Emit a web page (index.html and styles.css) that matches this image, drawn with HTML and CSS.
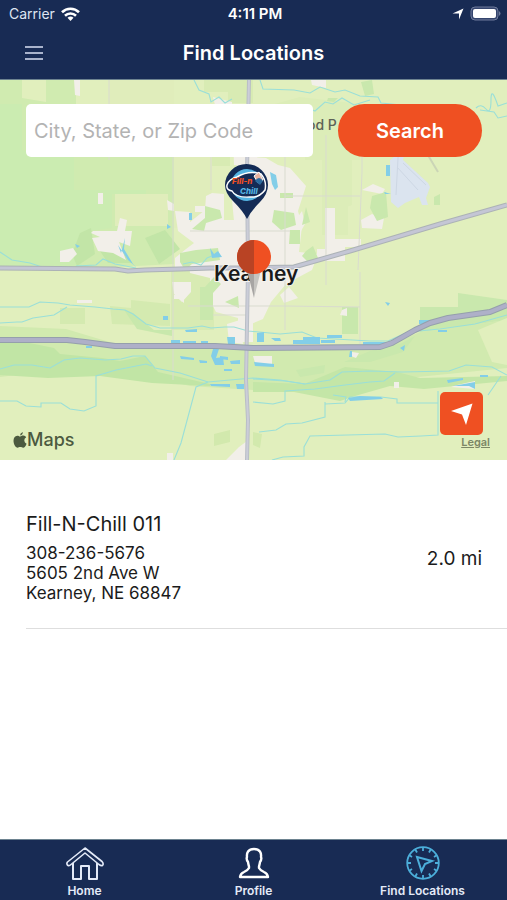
FILE: index.html
```html
<!DOCTYPE html>
<html lang="en">
<head>
  <meta charset="UTF-8" />
  <meta name="viewport" content="width=device-width, initial-scale=1.0" />
  <title>Find Locations</title>
  <link rel="stylesheet" href="styles.css">
</head>
<body>
  <header class="header">
    <div class="status-bar">
      <div class="carrier">
        <span>Carrier</span>
        <svg width="19" height="14" viewBox="0 0 19 14" fill="none" stroke="#fff" stroke-width="2.6">
          <path d="M1 5.2C5.700.6 13.300.6 18 5.2" />
          <path d="M4 8.700C7 5.800 12 5.800 15 8.700" />
          <path d="M6.500 10.800Q9.500 8.300 12.500 10.800L9.500 14Z" fill="#fff" stroke="none" />
        </svg>
      </div>
      <span class="time">4:11 PM</span>
      <div class="indicators">
        <svg width="12" height="12" viewBox="0 0 12 12"><path d="M11.500.5L7 11.500V5.500L.5 5.500Z" fill="#fff" /></svg>
        <svg width="31" height="15" viewBox="0 0 31 15">
          <rect x="1" y="1" width="27" height="13" rx="4" fill="#35456e" stroke="#6f7b9b" />
          <rect x="3" y="3" width="23" height="9" rx="2" fill="#fff" />
          <path d="M29 5Q32 7.500 29 10Z" fill="#6f7b9b" />
        </svg>
      </div>
    </div>
    <div class="nav-bar">
      <button class="menu-button" type="button" aria-label="Menu">
        <svg width="18" height="16" viewBox="0 0 18 16" stroke="#a9b3cc" stroke-width="2"><path d="M0 2H18M0 8H18M0 14H18" /></svg>
      </button>
      <h1>Find Locations</h1>
    </div>
  </header>

  <main>
    <section class="map" aria-label="Map">
      <svg class="map-canvas" viewBox="0 0 507 380" preserveAspectRatio="xMidYMid slice">
        <rect width="507" height="380" fill="#e1efbd" />

        <!-- fields and parkland -->
        <path d="M0 0H22V18L46 22V0H76V24H174V184L62 190H0Z" fill="#d0ebb0" />
        <path d="M0 24H22V70L74 76V110H146V114H112V148L82 152V188H0Z" fill="#cbecb1" />
        <path d="M109 0H174V24H109ZM174 50H212V148H174ZM115 114H168V146H115Z" fill="#e0edbb" />
        <path d="M204 0H253V23H228V12H204ZM212 56H230V86H212ZM171 190H214V250H171Z" fill="#d8ebb3" />
        <path d="M253 30L300 17L360 24V80H305V56H253ZM330 80H352V125L334 132ZM322 58H348V155H322Z" fill="#dcedb8" />
        <path d="M0 246L66 249L116 264L248 267L395 263L420 252L507 240V288L408 298L253 310L190 306L100 285L0 297Z" fill="#d1eaaf" />
        <path d="M60 228H85V244H60ZM110 226L131 228V220L170 224V246L112 244Z" fill="#d4eab0" />
        <path d="M0 257L54 268L60 274L102 278L120 281L145 276L158 292L210 304V306L152 303L100 296L48 298L0 295Z" fill="#c1e5a5" />
        <path d="M253 302L304 304L345 287L397 292L420 298L507 296V301L424 309L390 306L355 316L340 321L294 312H253Z" fill="#c4e6a7" />
        <path d="M296 290L325 285L324 293L300 297ZM344 282L370 271L402 263L415 256L403 272L370 282ZM420 227H458V213L507 220V240L420 252Z" fill="#c9e8ad" />
        <path d="M342 227H358V254H342ZM124 230L133 233L154 250L172 250V256L137 249Z" fill="#c8e8ac" />
        <path d="M478 250L507 238V285L492 282Z" fill="#e1efbd" />
        <path d="M214 354L230 350V362L214 366ZM253 352L262 354L260 368L253 365Z" fill="#d2e9ad" />
        <path d="M80 153L91 148L95 174L77 186L72 174ZM98 168L112 165L124 174L132 183H108ZM145 158L165 150L180 169L159 184Z" fill="#c2e5a7" />

        <!-- town blocks -->
        <g fill="#f2efe9">
          <path d="M74 0H80V16L75 15ZM98 113H103V124H98ZM100 157L91 153L93 151H117L120 138L127 140L125 151H132L130 166L119 162L126 180L113 173L98 171L92 158ZM60 171L73 168L77 174L69 182H60Z" />
          <path d="M167 120L174 124V131L168 130ZM175 131L190 132V142L205 130L206 116L212 113L224 114V140H238V118H253V262H238V238L216 232L210 220V198L190 193L189 184L175 190V178L186 169L194 163L178 151Z" />
          <path d="M238 76L266 78L278 85L290 88L306 106L298 131L302 146L299 172L318 174L312 190L286 204L271 222L263 239L244 247L232 120Z" />
          <path d="M198 47H225L224 52L252 63L260 85H234L233 55ZM317 169H325V159H361V167H345V181H317ZM361 140L372 134L384 138L382 149L362 148ZM325 128H335V168H325Z" />
          <path d="M362 110L373 104L385 109L382 114ZM302 131L305 144L297 158L286 154ZM172 202H191V212L182 222L174 214ZM77 220H92V223H77ZM227 244L240 240L243 264L229 262Z" />
          <path d="M342 230L347 228V236L340 235ZM352 272L359 273L356 278L351 276ZM394 302H399V308H394ZM311 0H326V8L312 5ZM457 305L475 301V309L451 307ZM239 367L247 361V380H226ZM167 373H173V380H167ZM178 218L184 214V223ZM174 215H180V219H174Z" />
          <path d="M253 276H272V284L256 286ZM195 126H209V132H195ZM213 17L232 22V25H215ZM280 215L289 207L298 218L284 223ZM279 49H307V55H286Z" />
        </g>
        <g fill="#c9e8ad">
          <path d="M192 149L205 138V126L220 130L222 138L206 143L204 151ZM180 173L196 170L218 168L220 180L192 184L185 190L180 182Z" />
          <path d="M274 130L294 133L296 145L281 150L272 142ZM280 113H293V118H280ZM290 150H300V164H289ZM225 222L238 216L239 228ZM205 207L214 197L221 204L213 213V240H200V207ZM306 127L310 142L302 145ZM306 171L313 166L318 178L309 183L302 176Z" />
          <path d="M372 116L386 112L388 137L377 141L370 128ZM328 18L338 18L334 22L327 21ZM361 2L372 0L374 14L365 16ZM434 117L440 114V125H434Z" />
        </g>
        <path d="M399 58H408L403 80L428 103L430 107L426 118L428 125H422L419 117L405 123L398 128L391 122L390 80L394 77Z" fill="#dbe4ef" />
        <path d="M399 60L396 115M403 83L426 105M397 87L418 110" stroke="#cdd7e4" fill="none" />

        <!-- streets -->
        <path d="M109 0V80M173 50V300M211 50V110M285 55V250M326 55V205M362 52V92L358 190M190 151H290M285 116H360M188 226H285L360 227M360 192V270M213 235H248" stroke="#d9dbcf" fill="none" />
        <path d="M413 50L438 92" stroke="#cbd5b6" stroke-width="2" fill="none" />

        <!-- rivers and creeks -->
        <g fill="none" stroke="#9adfd8" stroke-width="1.100">
          <path d="M194 0L199 10L209 14L211 22L219 17L225 23L232 19M260 0L263 9L294 10L310 13L320 7L335 12L345 10L360 16L378 17L381 23L401 25M300 25L315 31L325 22L333 24L342 18L354 25L370 20" />
          <path d="M476 28Q481 23 486 29T491 20T498 26L507 23M480 30L494 32L498 38L507 36" />
          <path d="M0 172L12 180L30 183L42 187M76 186L96 185L103 179L115 184L136 188M183 184L192 182L201 185L207 178L219 173" />
          <path d="M0 227H29L40 222L58 223L70 225L95 227L113 229L125 230L133 234L146 244L160 248L178 248L188 248L202 246L211 248L225 247L234 247L248 251L280 254L302 252L317 258L370 261L388 261L408 252L440 249L475 244L507 235" />
          <path d="M0 243L17 242L22 242L33 238L54 235L67 227" />
          <path d="M0 289L14 285L32 285L50 288L64 280L80 278L105 280L121 279L133 276H145L155 288L180 293L208 302L230 300L253 298L280 300L305 304L330 300L342 292L370 291L402 292L449 291L466 285L492 287L507 295" />
          <path d="M0 321H17L26 326L41 327V323H61L70 329L84 331L96 326V296L116 290L146 284L152 286M208 302L196 307L181 363L174 380M253 322L273 324L285 321V311L315 309L345 305L370 302L384 301L395 293M333 315L346 317L345 322M253 322L273 324M325 322V337L302 343L286 344L276 350L259 352" />
          <path d="M325 324L345 323L350 317L381 317L397 319V323H438M438 311V355L421 356L398 357L385 354L310 356L304 367V376L283 377L272 380M501 296L488 315M253 299L285 301L305 304" />
        </g>
        <g fill="#83cee8">
          <path d="M112 156L118 165L121 173L125 158L124 169L133 184L137 188L128 180L120 168ZM167 144L171 147L167 149ZM189 133H192V140H189ZM210 168L214 174L218 171L222 177L212 178ZM270 92L276 95L278 107L275 110L272 104ZM386 85H390V96H386ZM384 112L391 114H385ZM75 164L80 166L77 168ZM163 236H168V240H163Z" />
          <path d="M171 260H180V263H171ZM183 261H196V263H183ZM185 250L197 249V252H186ZM227 257H235V264H228ZM201 261H208V263H201ZM180 276L194 278V280L181 279ZM199 280L207 281V283H200ZM213 269H219L216 278L223 277L224 285H215L211 276ZM220 276L228 277V280L220 279ZM230 281L240 280V284H231ZM224 289H232V291H224ZM210 304H230V307L211 306ZM236 304H244V309H237ZM257 253L264 252V262H257ZM271 258H280L281 261H275ZM293 260H303V257H320V264H293ZM327 255H342V258H327ZM321 260H335V263H321ZM363 262H388V265H363ZM419 240H429V244H419ZM350 271H352V277H349ZM400 268L405 265L404 271ZM438 250H447V252H438ZM385 222L390 223L388 226ZM254 282L274 284V287L255 286ZM447 300L463 298V300L448 303ZM453 306L475 302V309L469 306ZM480 295H488V297H480ZM348 318L360 316L381 317L383 319L350 321ZM86 266H92V268H86Z" />
        </g>

        <!-- highways -->
        <g fill="none" stroke-linejoin="round">
          <path d="M249 0L247 90L248 190L246 300L248 340L247 380" stroke="#b9bec6" stroke-width="4" />
          <path d="M249 0L247 90L248 190L246 300L248 340L247 380" stroke="#cbcdd8" stroke-width="2" />
          <path d="M0 188L115 189L128 191L145 190L180 189L210 188L240 188L294 187L350 171L400 156L440 144L507 125" stroke="#acb2b6" stroke-width="5" />
          <path d="M0 188L115 189L128 191L145 190L180 189L210 188L240 188L294 187L350 171L400 156L440 144L507 125" stroke="#c4c6d5" stroke-width="3" />
          <path d="M0 260L67 260L85 262L115 266L215 266L253 268L380 267L392 263L415 250L430 243L448 238L490 232L507 225" stroke="#959fac" stroke-width="6" />
          <path d="M0 260L67 260L85 262L115 266L215 266L253 268L380 267L392 263L415 250L430 243L448 238L490 232L507 225" stroke="#aeb0c8" stroke-width="4" />
        </g>

        <text class="map-place" x="307" y="50">od P</text>
        <text class="map-city" x="214" y="201">Kearney</text>

        <!-- store marker -->
        <g transform="translate(225 84)">
          <path d="M22 55Q18 47 8 37Q0 29 0 21A21.500 21 0 0 1 43 21Q43 30 35 38Q26 47 22 55Z" fill="#142b55" />
          <circle cx="22" cy="21" r="16" fill="#55b4e2" />
          <path d="M2 21Q4 15 12 13Q24 6 36 10Q42 17 40 26Q34 34 25 33Q11 34 7 27Q1 26 2 21Z" fill="#142b55" stroke="#fff" stroke-width="1.500" />
          <path d="M29 12L34 8L38 16L33 19Z" fill="#e9b39f" stroke="#fff" />
          <path d="M30 17Q34 11 38 17L35 21Z" fill="#2c6b9e" />
          <text class="logo-fill" x="7" y="20">Fill-n</text>
          <text class="logo-chill" x="15" y="30">Chill</text>
        </g>

        <!-- search centre pin -->
        <path d="M247 190H254V218Z" fill="#a7a5a3" />
        <path d="M254 190H261L254 218Z" fill="#c5c4c0" />
        <circle cx="254" cy="177" r="17" fill="#ef5022" />
        <path d="M254 160A17 17 0 0 0 254 194Z" fill="#b94324" />
      </svg>

      <form class="search">
        <input type="text" aria-label="City, State, or Zip Code" placeholder="City, State, or Zip Code" />
        <button type="submit">Search</button>
      </form>

      <div class="map-footer">
        <div class="map-brand">
          <svg width="14" height="16" viewBox="0 0 14 16" fill="#4c5a3f">
            <path d="M7 4.500C8.500 4.200 9 3.500 10.500 3.600Q12.300 3.800 13.200 5.200Q11 6.500 11.300 8.800Q11.500 11 13.600 11.800Q12 15.700 10.200 15.700C9 15.700 8.600 15 7.300 15S5.600 15.700 4.500 15.700C2.600 15.700.5 12 .5 8.700Q.6 4 4.300 3.700C5.400 3.700 6.200 4.400 7 4.500Z" />
            <path d="M7 3.500Q7 1 9.800 0Q10 2.800 7 3.500Z" />
          </svg>
          <span>Maps</span>
        </div>
        <div class="map-tools">
          <button class="locate-button" type="button" aria-label="My location">
            <svg width="22" height="22" viewBox="0 0 22 22"><path d="M21.500.5L15 22L11 11.500L0 8Z" fill="#fff" /></svg>
          </button>
          <a class="legal" href="#">Legal</a>
        </div>
      </div>
    </section>

    <ul class="locations">
      <li class="location">
        <div>
          <h2>Fill-N-Chill 011</h2>
          <p>308-236-5676</p>
          <p>5605 2nd Ave W</p>
          <p>Kearney, NE 68847</p>
        </div>
        <span class="distance">2.0 mi</span>
      </li>
    </ul>
  </main>

  <nav class="tab-bar">
    <a href="#">
      <svg width="38" height="34" viewBox="0 0 38 34" fill="none" stroke="#e4eaf8" stroke-width="1.600" stroke-linejoin="round">
        <path d="M19 2L1.500 16Q0 18 2 19.500Q3.500 20 5 18.500L19 7L33 18.500Q35 20 36.500 19.500Q38 18 36 15.500Z" />
        <path d="M7 17V33H15V20H23V33H31V17" stroke-width="2" />
      </svg>
      <span>Home</span>
    </a>
    <a href="#">
      <svg width="38" height="34" viewBox="0 0 38 34" fill="none" stroke="#fff" stroke-width="2.400" stroke-linejoin="round">
        <path d="M19 3C13 3 11.500 7 12 11Q11 13 13 16Q13.500 19 14 20.500V22Q13 24 9 26Q5.500 27.500 5 31H33Q32.500 27.500 29 26Q25 24 24 22V20.500Q24.500 19 25 16Q27 13 26 11C26.500 7 25 3 19 3Z" />
      </svg>
      <span>Profile</span>
    </a>
    <a href="#" aria-current="page">
      <svg width="38" height="34" viewBox="0 0 38 34" fill="none" stroke="#4caeda" stroke-width="1.800">
        <circle cx="19" cy="17" r="15.800" />
        <path d="M19 1V5M19 29V33M3 17H7M31 17H35M11 3L13 6.500M27 3L25 6.500M5 9L8 11M33 9L30 11M5 25L8 23M33 25L30 23M11 31L13 27.500M27 31L25 27.500" />
        <path d="M13 11L28 15L21 18L17.500 25Z" stroke-width="2" />
      </svg>
      <span>Find Locations</span>
    </a>
  </nav>
</body>
</html>
```

FILE: styles.css
```css
* {
  box-sizing: border-box;
}
body {
  font-family: Inter, Roboto, sans-serif;
  display: flex;
  flex-direction: column;
  min-height: 100vh;
  margin: 0;
  background: #fff;
  color: #1b1b1b;
}
button {
  border: none;
  padding: 0;
  font-family: inherit;
  cursor: pointer;
}
svg {
  display: block;
}

/* header */
.header {
  background-color: #182b54;
  color: #fff;
  border-bottom: 1px solid #6d8390;
}
.status-bar {
  display: grid;
  grid-template-columns: 1fr auto 1fr;
  align-items: center;
  height: 27px;
  padding: 0 6px 0 9px;
  font-size: 14px;
}
.carrier, .indicators {
  display: flex;
  align-items: center;
  gap: 6px;
}
.carrier {
  color: #dfe5f2;
}
.time {
  font-size: 15px;
  font-weight: 600;
}
.indicators {
  justify-content: flex-end;
}
.nav-bar {
  display: grid;
  grid-template-columns: 1fr auto 1fr;
  align-items: center;
  height: 52px;
  padding: 0 25px;
}
.menu-button {
  background: none;
  justify-self: start;
}
h1 {
  margin: 0;
  font-size: 20px;
  font-weight: 600;
}

/* map */
.map {
  position: relative;
  display: flex;
  flex-direction: column;
  justify-content: space-between;
  height: 380px;
}
.map-canvas {
  position: absolute;
  inset: 0;
  width: 100%;
  height: 100%;
}
.map-place {
  font-size: 14px;
  font-weight: 500;
  fill: #5d6256;
}
.map-city {
  font-size: 21px;
  font-weight: 600;
  fill: #1b1b1b;
  stroke: #f5f3ee;
  stroke-width: 2px;
  paint-order: stroke;
}
.logo-fill, .logo-chill {
  font-size: 8px;
  font-style: italic;
  font-weight: 800;
}
.logo-fill {
  fill: #ef5022;
}
.logo-chill {
  fill: #55b4e2;
}
.search {
  position: relative;
  display: flex;
  gap: 25px;
  padding: 24px 25px 0 26px;
}
.search input {
  flex: 1;
  min-width: 0;
  height: 53px;
  padding: 0 8px;
  border: none;
  border-radius: 5px;
  background: #fff;
  font-family: inherit;
  font-size: 20px;
}
.search input::placeholder {
  color: #b3b3b3;
}
.search button {
  width: 144px;
  height: 53px;
  border-radius: 27px;
  background-color: #ef5022;
  color: #fff;
  font-size: 20px;
  font-weight: 600;
}
.map-footer {
  position: relative;
  display: flex;
  justify-content: space-between;
  align-items: flex-end;
  padding: 0 17px 10px 13px;
}
.map-brand {
  display: flex;
  align-items: center;
  color: #4c5a3f;
  font-size: 18px;
  font-weight: 500;
  line-height: 20px;
}
.map-tools {
  display: flex;
  flex-direction: column;
  align-items: flex-end;
}
.locate-button {
  display: grid;
  place-items: center;
  width: 43px;
  height: 43px;
  margin-right: 7px;
  border-radius: 5px;
  background-color: #ef5022;
}
.legal {
  color: #7c8766;
  font-size: 11px;
  font-weight: 600;
  line-height: 15px;
}

/* results */
.locations {
  margin: 0;
  padding: 49px 0 0 26px;
  list-style: none;
}
.location {
  display: flex;
  justify-content: space-between;
  align-items: center;
  padding: 0 25px 25px 0;
  border-bottom: 1px solid #dedede;
}
h2 {
  margin: 0 0 4px;
  font-size: 20px;
  font-weight: 400;
  line-height: 30px;
}
.location p {
  margin: 0;
  font-size: 17px;
  line-height: 20px;
}
.distance {
  padding-top: 4px;
  font-size: 19px;
}

/* tabs */
.tab-bar {
  display: grid;
  grid-template-columns: repeat(3, 1fr);
  margin-top: auto;
  background-color: #182b54;
  border-top: 1px solid #6d8390;
}
.tab-bar a {
  display: flex;
  flex-direction: column;
  align-items: center;
  gap: 3px;
  padding: 6px 0 1px;
  color: #e4eaf8;
  font-size: 12px;
  font-weight: 600;
  line-height: 16px;
  text-decoration: none;
}
```
